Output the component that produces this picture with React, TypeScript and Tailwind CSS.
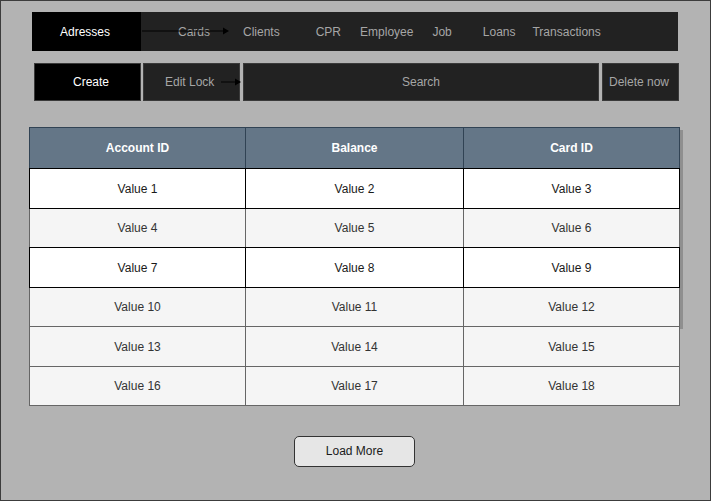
import React from 'react';

const navItems = [
  { label: 'Cards', ml: 'ml-[37px]' },
  { label: 'Clients', ml: 'ml-[33px]' },
  { label: 'CPR', ml: 'ml-[36px]' },
  { label: 'Employee', ml: 'ml-[19px]' },
  { label: 'Job', ml: 'ml-[19px]' },
  { label: 'Loans', ml: 'ml-[31px]' },
  { label: 'Transactions', ml: 'ml-[17px]' },
];

const rows = [
  { values: ['Value 1', 'Value 2', 'Value 3'], white: true, h: 'h-[41px]' },
  { values: ['Value 4', 'Value 5', 'Value 6'], white: false, h: 'h-[40px]' },
  { values: ['Value 7', 'Value 8', 'Value 9'], white: true, h: 'h-[41px]' },
  { values: ['Value 10', 'Value 11', 'Value 12'], white: false, h: 'h-[40px]' },
  { values: ['Value 13', 'Value 14', 'Value 15'], white: false, h: 'h-[41px]' },
  { values: ['Value 16', 'Value 17', 'Value 18'], white: false, h: 'h-[40px]' },
];

const colWidths = ['w-[216px]', 'w-[218px]', 'flex-1'];

function Arrow({ width }: { width: number }) {
  return (
    <svg width={width} height="10" viewBox={`0 0 ${width} 10`} className="block">
      <line x1="0" y1="5" x2={width - 5} y2="5" stroke="#000" strokeWidth="1" />
      <polygon points={`${width - 6},1.5 ${width},5 ${width - 6},8.5`} fill="#000" />
    </svg>
  );
}

export default function App() {
  return (
    <div
      className="w-[711px] h-[501px] bg-[#b3b3b3] border border-[#3c3c3c] box-border text-[12px]"
      style={{ fontFamily: '"Liberation Sans", Arial, sans-serif' }}
    >
      {/* Top nav */}
      <div className="relative ml-[31px] mt-[11px] w-[646px] h-[39px] bg-[#222222] flex items-center">
        <div className="w-[109px] h-full bg-black flex items-center justify-center pr-[3px] text-white">
          Adresses
        </div>
        {navItems.map((item) => (
          <span key={item.label} className={`${item.ml} text-[#a6a6a6]`}>
            {item.label}
          </span>
        ))}
        <div className="absolute left-[110px] top-[14px]">
          <Arrow width={87} />
        </div>
      </div>

      {/* Actions */}
      <div className="flex ml-[33px] mt-[12px] h-[38px]">
        <button className="w-[107px] h-full bg-black border border-[#3a3a3a] pl-[7px] text-white">
          Create
        </button>
        <div className="relative ml-[2px] w-[97px] h-full bg-[#222222] border border-[#3a3a3a] flex items-center pl-[21px] text-[#a6a6a6]">
          Edit Lock
          <div className="absolute left-[77px] top-[13px]">
            <Arrow width={20} />
          </div>
        </div>
        <div className="ml-[3px] w-[356px] h-full bg-[#222222] border border-[#3a3a3a] flex items-center justify-center text-[#a6a6a6]">
          Search
        </div>
        <div className="ml-[3px] w-[77px] h-full bg-[#222222] border border-[#3a3a3a] flex items-center justify-center pr-[3px] text-[#a6a6a6]">
          Delete now
        </div>
      </div>

      {/* Table */}
      <div className="ml-[28px] mt-[26px] w-[651px] relative">
        <div className="absolute left-[3px] top-[3px] w-[651px] h-[199px] bg-black/20" />
        <div className="relative flex h-[42px] bg-[#647687] border border-[#314354] text-white font-bold">
          {['Account ID', 'Balance', 'Card ID'].map((h, i) => (
            <div
              key={h}
              className={`${colWidths[i]} flex items-center justify-center ${i < 2 ? 'border-r border-[#314354]' : ''}`}
            >
              {h}
            </div>
          ))}
        </div>
        {rows.map((row, ri) => (
          <div
            key={ri}
            className={`relative -mt-px flex ${row.h} border ${
              row.white ? 'bg-white border-black z-10 text-[#1a1a1a]' : 'bg-[#f5f5f5] border-[#666666] text-[#333333]'
            }`}
          >
            {row.values.map((v, ci) => (
              <div
                key={v}
                className={`${colWidths[ci]} flex items-center justify-center ${
                  ci < 2 ? (row.white ? 'border-r border-black' : 'border-r border-[#666666]') : ''
                }`}
              >
                {v}
              </div>
            ))}
          </div>
        ))}
      </div>

      {/* Load more */}
      <div className="flex justify-center ml-[28px] w-[651px] mt-[30px]">
        <button className="w-[121px] h-[31px] rounded-[5px] border border-[#333333] bg-[#e6e6e6] text-[#1a1a1a] pb-[1px]">
          Load More
        </button>
      </div>
    </div>
  );
}
